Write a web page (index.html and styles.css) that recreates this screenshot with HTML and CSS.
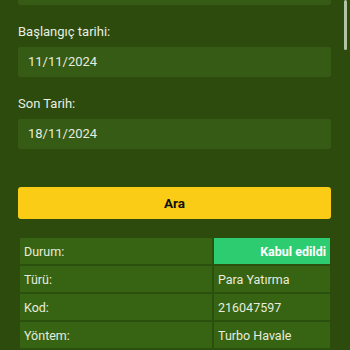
FILE: index.html
```html
<!DOCTYPE html>
<html lang="tr">
<head>
<meta charset="utf-8">
<link rel="stylesheet" href="styles.css">
</head>
<body>
<div class="page">
  <div class="field first">
    <div class="input"></div>
  </div>
  <div class="field">
    <label class="label">Başlangıç tarihi:</label>
    <div class="input">11/11/2024</div>
  </div>
  <div class="field">
    <label class="label">Son Tarih:</label>
    <div class="input">18/11/2024</div>
  </div>
  <button class="btn">Ara</button>
  <table class="result">
    <tr><td>Durum:</td><td class="status">Kabul edildi</td></tr>
    <tr><td>Türü:</td><td>Para Yatırma</td></tr>
    <tr><td>Kod:</td><td>216047597</td></tr>
    <tr><td>Yöntem:</td><td>Turbo Havale</td></tr>
  </table>
</div>
<div class="scrollbar"></div>
</body>
</html>
```
FILE: styles.css
```css
html, body {
  margin: 0;
  padding: 0;
  height: 100%;
  overflow: hidden;
}
body {
  background: #2c4b0d;
  font-family: Roboto, "Liberation Sans", sans-serif;
  color: #e9efe2;
}
.page {
  padding: 0 19px 0 18px;
  display: flex;
  flex-direction: column;
}
.field {
  display: flex;
  flex-direction: column;
}
.field.first {
  margin-top: -25px;
}
.label {
  font-size: 13px;
  line-height: 16px;
  margin-top: 19px;
  margin-bottom: 7px;
}
.input {
  height: 30px;
  box-sizing: border-box;
  background: #355b15;
  border-radius: 2px;
  padding-left: 10px;
  font-size: 13px;
  line-height: 30px;
  color: #e6ecdf;
}
.btn {
  margin-top: 38px;
  height: 32px;
  border: none;
  border-radius: 3px;
  background: #facc15;
  color: #111;
  font-family: Roboto, "Liberation Sans", sans-serif;
  font-weight: 700;
  font-size: 13.5px;
  padding: 0;
}
.result {
  margin: 19px 1px 0 2px;
  border-collapse: collapse;
  font-size: 12.5px;
}
.result td {
  background: #376413;
  border: 2px solid #2b4f0c;
  height: 26px;
  padding: 0 4px;
  color: #e6ecdf;
}
.result tr:first-child td {
  border-top: none;
}
.result td:first-child {
  border-left: none;
  width: 184px;
}
.result td:last-child {
  border-right: none;
}
.result td.status {
  background: #2ecc71;
  color: #fff;
  font-weight: 700;
  text-align: right;
}
.scrollbar {
  position: absolute;
  right: 3px;
  top: 0;
  width: 3px;
  height: 50px;
  border-radius: 2px;
  background: #b4c3a6;
}
```
